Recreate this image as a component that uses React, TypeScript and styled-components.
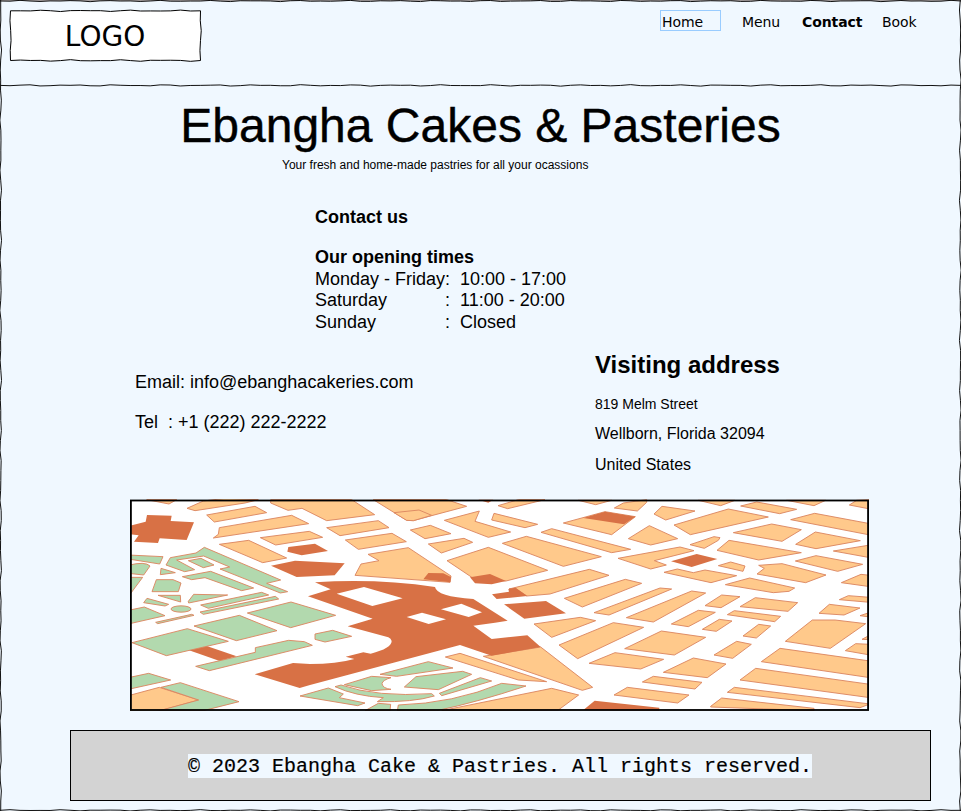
import React from "react";
import styled, { createGlobalStyle } from "styled-components";

const GlobalStyle = createGlobalStyle`
  *, *::before, *::after { box-sizing: border-box; }
  body { margin: 0; background: #f0f8ff; overflow: hidden; }
`;

const Page = styled.div`
  position: relative;
  width: 961px;
  height: 811px;
  overflow: hidden;
  display: flex;
  flex-direction: column;
  background: #f0f8ff;
  color: #000;
  font-family: "Liberation Sans", Helvetica, Arial, sans-serif;
`;

const Frame = styled.svg`
  position: absolute;
  inset: 0;
  width: 100%;
  height: 100%;
  overflow: hidden;
  pointer-events: none;
`;

const Header = styled.header`
  flex: none;
  height: 86px;
  display: flex;
  justify-content: space-between;
  align-items: flex-start;
  padding: 10px 44px 0 10px;
  font-family: "DejaVu Sans", Verdana, sans-serif;
`;

const Logo = styled.div`
  position: relative;
  width: 191px;
  height: 51px;
  display: flex;
  justify-content: center;
  padding-right: 1px;
  font-size: 28px;
  line-height: 53px;
`;

const LogoFrame = styled.svg`
  position: absolute;
  inset: 0;
  width: 100%;
  height: 100%;
  overflow: visible;
`;

const LogoText = styled.span`
  position: relative;
`;

const Nav = styled.nav`
  display: grid;
  grid-template-columns: 82px 60px 80px 35px;
  align-items: start;
`;

const NavLink = styled.a<{ $bold?: boolean; $focused?: boolean }>`
  height: 21px;
  width: ${(p) => (p.$focused ? "61px" : "auto")};
  border: 1px solid ${(p) => (p.$focused ? "#99ccff" : "transparent")};
  border-width: 1px 0;
  ${(p) => p.$focused && "border-left-width: 1px; border-right-width: 1px;"}
  padding-left: ${(p) => (p.$focused ? "1px" : "0")};
  font-size: 14px;
  line-height: 22px;
  font-weight: ${(p) => (p.$bold ? 700 : 400)};
  letter-spacing: ${(p) => (p.$bold ? "-0.1px" : "-0.1px")};
  white-space: nowrap;
  color: #000;
`;

const Hero = styled.section`
  flex: none;
  display: flex;
  flex-direction: column;
  padding-top: 10px;
`;

const Title = styled.h1`
  margin: 0 0 1px;
  text-align: center;
  font-size: 48px;
  font-weight: 400;
  line-height: 60px;
  -webkit-text-stroke: 0.4px #000;
`;

const Tagline = styled.p`
  margin: 0 0 0 282px;
  font-size: 12px;
  line-height: 16px;
`;

const Hours = styled.section`
  flex: none;
  margin: 34px 0 0 315px;
  font-size: 18px;
`;

const HoursHeading = styled.h2<{ $gap: number }>`
  margin: 0 0 ${(p) => p.$gap}px;
  font-size: 18px;
  line-height: 20px;
`;

const HoursRow = styled.div`
  display: grid;
  grid-template-columns: 130px 15px 1fr;
  line-height: 21.5px;
  white-space: nowrap;
`;

const Details = styled.section`
  flex: none;
  height: 151px;
  margin-top: 15px;
  display: grid;
  grid-template-columns: 460px 1fr;
  padding-left: 135px;
`;

const Reach = styled.div`
  padding-top: 24px;
  font-size: 18px;
  line-height: 20px;
  white-space: pre;
  display: flex;
  flex-direction: column;
  gap: 20px;
`;

const Address = styled.address`
  font-style: normal;
`;

const AddressHeading = styled.h2`
  margin: 0;
  font-size: 24px;
  line-height: 33px;
`;

const AddressLine = styled.p<{ $size: number; $height: number }>`
  margin: 0;
  font-size: ${(p) => p.$size}px;
  line-height: ${(p) => p.$height}px;
`;

const MapView = styled.svg`
  flex: none;
  display: block;
  width: 739px;
  height: 212px;
  margin-left: 130px;
`;

const Footer = styled.footer`
  flex: none;
  width: 861px;
  height: 71px;
  margin: 19px 0 0 70px;
  padding: 23px 1px 0 0;
  border: 1px solid #000;
  background: #d3d3d3;
  display: flex;
  justify-content: center;
  align-items: flex-start;
`;

const Copyright = styled.span`
  height: 24px;
  background: #f0f8ff;
  font-family: "Liberation Mono", "Courier New", monospace;
  font-size: 20px;
  line-height: 25px;
  white-space: nowrap;
  -webkit-text-stroke: 0.2px #000;
`;

/* Hand-drawn line: a straight run broken every 10px by a small wobble. */
function sketch(x1: number, y1: number, x2: number, y2: number, seed: number, amp = 1) {
  const length = Math.hypot(x2 - x1, y2 - y1);
  const steps = Math.max(1, Math.round(length / 10));
  const nx = -(y2 - y1) / length;
  const ny = (x2 - x1) / length;
  const points: string[] = [];
  for (let i = 0; i <= steps; i++) {
    const t = i / steps;
    const edge = i === 0 || i === steps ? 0 : 1;
    const w = edge * amp * (0.6 * Math.sin(i * 1.35 + seed) + 0.5 * Math.sin(i * 2.3 + seed * 3));
    points.push(`${(x1 + (x2 - x1) * t + nx * w).toFixed(2)},${(y1 + (y2 - y1) * t + ny * w).toFixed(2)}`);
  }
  return points.join(" ");
}

const logoOutline = [
  sketch(0.5, 0.8, 190.5, 0.8, 1, 0.7),
  sketch(190.5, 0.8, 190.5, 50.5, 2, 0.7),
  sketch(190.5, 50.5, 0.5, 50.5, 3, 0.8),
  sketch(0.5, 50.5, 0.5, 0.8, 5, 0.6),
].join(" ");

type Kind = "sand" | "park" | "brick";
type Shape = [Kind, string];
const poly = (kind: Kind) => (points: string): Shape => [kind, `M${points}Z`];
const sand = poly("sand");
const park = poly("park");
const brick = poly("brick");

const fills: Record<Kind, string> = { sand: "#ffc98b", park: "#b2d9ae", brick: "#d87145" };

const west: Shape[] = [
  sand("65,14 155,14 132,27"),
  sand("186,40 235,18 300,10 400,14 360,24 210,47"),
  sand("245,60 390,34 425,53 268,81"),
  sand("283,98 500,61 551,86 265,129 280,118"),
  sand("406,128 553,109 593,127 452,150"),
  sand("283,148 371,136 485,189 413,203"),
  sand("437,14 437,24 489,46 531,40 605,77 749,59 680,14"),
  sand("10,602 103,577 221,615 103,648 10,655"),
  brick("15,92 62,80 66,60 140,62 137,78 207,82 185,135 104,130 99,144 27,140 41,121 15,118"),
  brick("490,156 570,146 609,168 530,181 487,170"),
  brick("438,212 510,197 659,205 629,241 515,246"),
  brick("190,465 245,453 335,484 284,498"),
  park("10,180 114,185 104,207 10,192"),
  ["park", "M10,211Q60,198 75,213L56,240L10,235Z"],
  park("10,247 53,247 15,298"),
  park("108,220 151,233 106,239"),
  park("94,254 144,254 168,264 160,290 81,290"),
  park("136,188 213,174 238,157 467,255 425,265 488,290 466,294 285,222 314,216 236,183 155,195 209,224 179,230 123,210"),
  park("190,197 228,190 267,210 235,218"),
  park("172,245 257,229 386,279 350,287 240,248 200,254"),
  park("66,310 131,328 120,333 56,323"),
  park("99,301 166,301 167,321"),
  park("206,298 308,300 191,324 190,319"),
  ["park", "M138,342a30,9.5 0 1 0 60,0a30,9.5 0 1 0 -60,0Z"],
  park("227,330 410,292 431,300 250,340"),
  park("225,351 451,304 461,312 235,358"),
  park("92,382 200,358 207,361 98,386"),
  park("10,346 58,336 120,362 10,387"),
  park("367,354 498,321 632,361 497,398"),
  park("207,393 343,361 456,407 334,437"),
  park("21,443 187,401 310,439 124,482"),
  park("212,514 391,472 391,458 491,436 538,440 562,451 253,527"),
  park("10,548 71,535 137,555 10,583"),
  park("108,577 166,563 342,620 235,647 103,647 221,615"),
];

const centre: Shape[] = [
  sand("50,98 205,77 237,98 90,122"),
  sand("106,135 246,115 289,140 145,163"),
  sand("190,14 410,14 470,34 365,62 310,77 290,76"),
  sand("252,53 327,45 365,61 310,77 290,76"),
  sand("301,105 361,91 423,116 345,131"),
  sand("403,76 508,48 495,79 602,111 535,127"),
  sand("552,55 683,88 645,98 545,75"),
  sand("355,147 462,130 488,142 394,174"),
  sand("174,178 295,158 423,243 420,262 135,241 153,207 207,197"),
  brick("355,234 400,235 423,246 421,262 340,253"),
  sand("411,197 535,157 713,226 588,258 490,250"),
  brick("480,247 540,237 588,258 545,268 495,265"),
  sand("406,486 450,475 710,560 625,555"),
  sand("395,647 725,580 806,600 745,645"),
  sand("520,484 692,456 848,577 817,586"),
  ["brick", "M15,262Q200,250 375,276Q380,305 490,312L593,377L555,383L490,392L545,432L652,421L692,456L545,482L450,450L0,570L-31,579L-166,538L-51,504L0,507Q80,507 133,492L107,485L160,472L182,476Q245,460 245,438Q243,430 235,427L113,394L188,371L-6,304L62,283ZM80,296L187,333L278,310L162,276ZM290,366L356,387L408,373L336,353ZM393,343L476,366L516,352L454,326Z"],
  park("15,417 68,406 125,424 45,441 15,433"),
  park("210,538 355,500 429,519 260,544"),
  park("283,576 318,545 458,529 485,538 385,584"),
  ["park", "M103,569L185,544L243,548Q218,555 216,566Q218,580 243,583L185,587Z"],
  park("-30,603 55,579 100,597 88,608 165,624 143,632"),
  ["park", "M75,575L93,570Q200,607 365,596L373,603Q310,622 202,620L220,608Q135,603 75,575Z"],
  park("165,647 205,625 242,628 240,647"),
  ["park", "M265,630Q430,625 575,565L648,573Q500,622 380,647L262,647Z"],
  park("388,595 511,548 545,558 395,602"),
  brick("505,14 550,14 535,23"),
];

const midEast: Shape[] = [
  sand("9,32 70,14 150,14 38,41"),
  sand("42,282 283,223 342,241 165,297 95,303 60,280"),
  brick("-9,298 42,290 40,282 62,278 97,303 5,312"),
  brick("27,328 153,318 213,355 88,371"),
  sand("205,84 330,50 421,65 350,119"),
  brick("265,69 330,50 421,65 387,88"),
  sand("138,112 170,101 407,163 350,173"),
  sand("22,145 94,124 319,185 205,214"),
  sand("400,131 463,92 548,131 467,150"),
  sand("358,39 385,24 455,14 455,22 427,48"),
  sand("250,16 350,16 302,29"),
  sand("477,57 501,34 600,48 512,75"),
  sand("537,90 700,42 820,66 586,119"),
  sand("369,190 555,156 597,167 478,197 514,210 467,222"),
  brick("528,199 605,177 667,192 590,216"),
  sand("507,232 547,222 595,233 630,225 725,242 648,263"),
  sand("208,310 391,253 440,265 262,336"),
  sand("297,353 495,279 530,282 342,360"),
  sand("394,368 590,288 632,294 475,381"),
  sand("529,387 610,346 661,352 580,395"),
  sand("117,387 256,367 302,377 170,427"),
  sand("192,450 355,383 446,397 248,491"),
  sand("389,461 499,408 632,427 538,480"),
  sand("282,505 360,473 506,493 437,522"),
  sand("505,532 595,489 693,507 637,548"),
  sand("442,561 475,544 621,562 600,582"),
  sand("357,600 397,577 582,600 548,624"),
  brick("265,645 299,617 493,638 493,647"),
];

const east: Shape[] = [
  sand("55,16 165,16 122,32"),
  sand("182,33 230,21 350,43 299,56"),
  sand("320,16 437,16 402,32"),
  sand("508,30 530,16 570,14 570,42"),
  sand("332,74 404,55 570,86 570,120"),
  sand("160,113 275,87 364,104 306,139"),
  sand("347,148 406,111 541,137 408,161"),
  sand("30,149 102,125 120,128 115,136 73,160"),
  sand("111,166 147,136 364,173 236,195"),
  sand("460,168 570,150 570,188"),
  sand("346,198 408,182 548,208 473,229"),
  sand("115,212 152,201 195,213 189,229"),
  sand("236,211 306,206 438,240 377,263 231,237 253,220"),
  sand("136,269 209,249 344,279 327,289 280,293"),
  sand("484,263 543,238 570,241 570,275"),
  sand("478,314 505,302 570,307 570,322"),
  sand("417,355 448,328 540,339 492,360"),
  sand("540,362 570,352 570,366"),
  sand("75,332 125,300 180,305 123,338"),
  sand("180,335 226,308 353,323 324,349"),
  sand("142,359 163,347 302,364 284,380"),
  sand("67,403 118,373 156,378 109,409"),
  sand("189,423 236,388 272,393 229,429"),
  sand("102,480 170,439 214,448 158,490"),
  sand("316,439 397,375 465,375 557,386 451,460"),
  sand("496,467 527,446 570,448 570,480"),
  sand("546,433 570,420 570,434"),
  sand("244,500 300,460 570,498 570,548"),
  sand("180,555 227,520 570,568 570,608"),
  sand("142,592 163,577 570,627 540,638"),
  sand("92,634 125,609 402,640 402,647 92,636"),
];

const districts = [west, centre, midEast, east];

function StreetMap() {
  return (
    <MapView viewBox="15 12 2217 636" role="img" aria-label="Street map">
      <rect x="17.5" y="16.5" width="2211.5" height="628.5" fill="#fff" />
      {districts.map((shapes, d) => (
        <g key={d} transform={`translate(${d * 555} 0)`} strokeWidth="2.8">
          {shapes.map(([kind, path], i) => (
            <path key={i} d={path} fill={fills[kind]} stroke={kind === "brick" ? "none" : "#dc8661"} />
          ))}
        </g>
      ))}
      <rect x="17.7" y="16.5" width="2211.5" height="628.5" fill="none" stroke="#000" strokeWidth="5.5" />
    </MapView>
  );
}

const openingTimes = [
  ["Monday - Friday", "10:00 - 17:00"],
  ["Saturday", "11:00 - 20:00"],
  ["Sunday", "Closed"],
];

export default function App() {
  return (
    <Page>
      <GlobalStyle />
      <Frame viewBox="0 0 961 811" fill="none" stroke="#111" strokeWidth="1">
        <path d="M0 0H961" stroke="#a9a2a2" strokeWidth="2" />
        <polyline points={sketch(0, 1, 961, 1, 2, 0.6)} />
        <polyline points={sketch(0.7, 0, 0.7, 811, 4, 0.8)} />
        <polyline points={sketch(960.3, 0, 960.3, 811, 6, 0.8)} />
        <polyline points={sketch(0, 810.3, 961, 810.3, 3, 0.6)} />
        <polyline points={sketch(0, 85.4, 961, 85.4, 1.5, 0.7)} />
      </Frame>
      <Header>
        <Logo>
          <LogoFrame viewBox="0 0 191 51">
            <polygon points={logoOutline} fill="#fff" stroke="#000" strokeWidth="1" />
          </LogoFrame>
          <LogoText>LOGO</LogoText>
        </Logo>
        <Nav>
          <NavLink $focused>Home</NavLink>
          <NavLink>Menu</NavLink>
          <NavLink $bold>Contact</NavLink>
          <NavLink>Book</NavLink>
        </Nav>
      </Header>
      <Hero>
        <Title>Ebangha Cakes &amp; Pasteries</Title>
        <Tagline>Your fresh and home-made pastries for all your ocassions</Tagline>
      </Hero>
      <Hours>
        <HoursHeading $gap={20}>Contact us</HoursHeading>
        <HoursHeading $gap={1.5}>Our opening times</HoursHeading>
        {openingTimes.map(([day, time]) => (
          <HoursRow key={day}>
            <span>{day}</span>
            <span>:</span>
            <span>{time}</span>
          </HoursRow>
        ))}
      </Hours>
      <Details>
        <Reach>
          <span>Email: info@ebanghacakeries.com</span>
          <span>{"Tel  : +1 (222) 222-2222"}</span>
        </Reach>
        <Address>
          <AddressHeading>Visiting address</AddressHeading>
          <AddressLine $size={14} $height={46}>819 Melm Street</AddressLine>
          <AddressLine $size={16} $height={13}>Wellborn, Florida 32094</AddressLine>
          <AddressLine $size={16} $height={49}>United States</AddressLine>
        </Address>
      </Details>
      <StreetMap />
      <Footer>
        <Copyright>© 2023 Ebangha Cake &amp; Pastries. All rights reserved.</Copyright>
      </Footer>
    </Page>
  );
}
